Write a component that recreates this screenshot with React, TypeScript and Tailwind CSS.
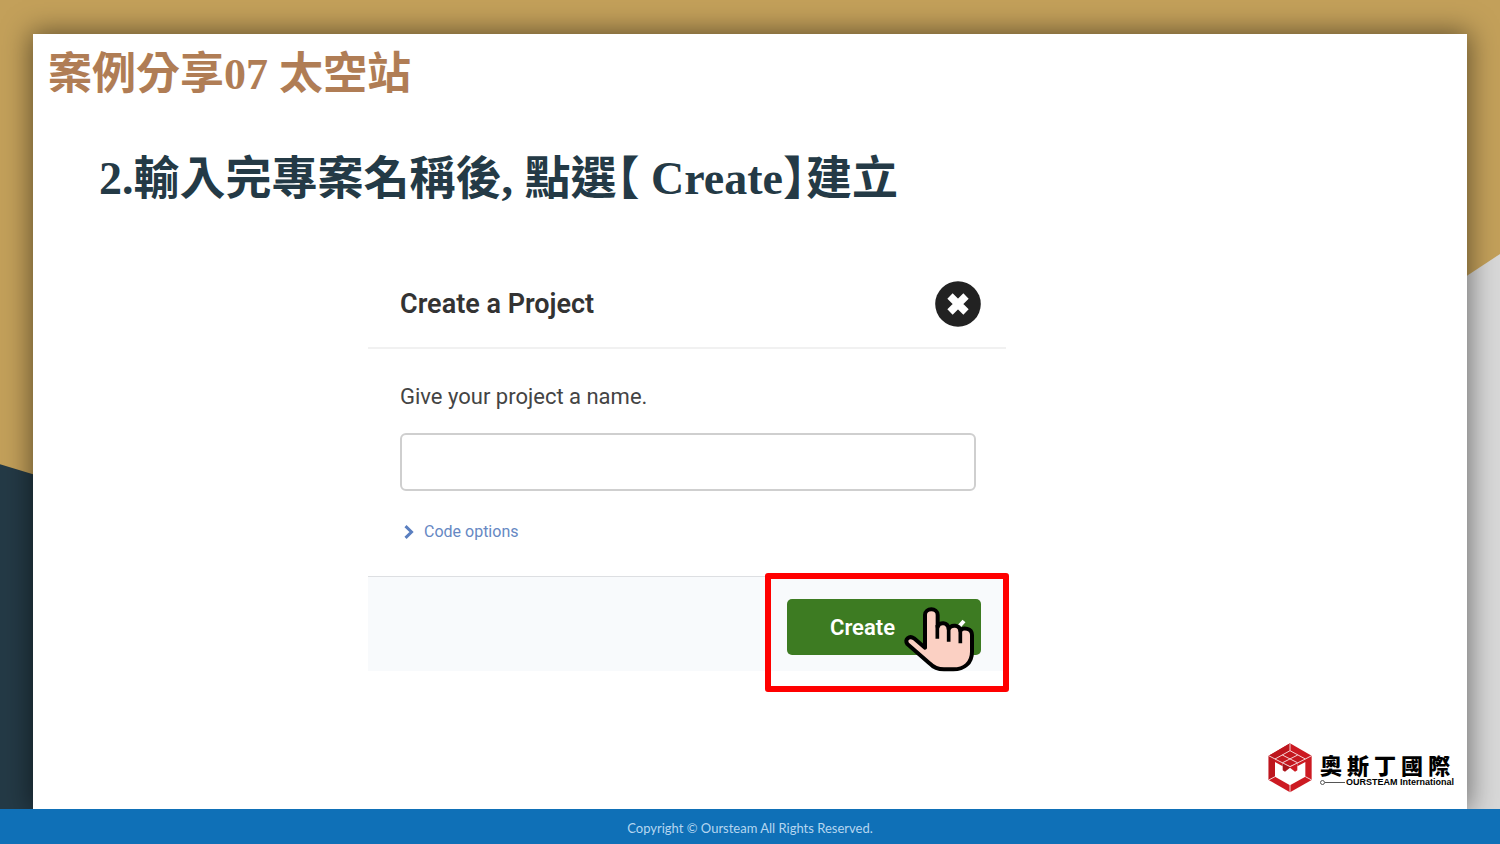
import React from "react";

function CloseIcon() {
  return (
    <svg viewBox="0 0 46 46" className="size-[46px]" aria-hidden="true">
      <circle cx="23" cy="23" r="22.8" fill="#222222" />
      <path d="M15 15 L31 31 M31 15 L15 31" stroke="#ffffff" strokeWidth="7.5" strokeLinecap="butt" />
    </svg>
  );
}

function ChevronIcon() {
  return (
    <svg viewBox="0 0 10 16" className="h-4 w-[10px]" aria-hidden="true">
      <path d="M1.5 2.2 L7.5 8 L1.5 13.8" fill="none" stroke="#5a7fc0" strokeWidth="3" />
    </svg>
  );
}

function CheckIcon() {
  return (
    <svg viewBox="0 0 24 20" className="h-5 w-6" aria-hidden="true">
      <path d="M3 11 L9 17 L21 4" fill="none" stroke="#ffffff" strokeWidth="4" />
    </svg>
  );
}

function HandPointer() {
  return (
    <svg viewBox="460 142 213 195" className="h-[65px] w-[71px]" aria-hidden="true">
      <path
        d="M523 264 L523 166 C523 143 561 143 561 166 L561 202 C565 186 592 186 594 208 C601 193 627 195 629 213 C637 202 664 205 664 226 L664 276 C664 311 640 329 608 329 L580 329 C560 329 547 322 538 312 L470 253 C460 240 476 226 490 236 Z"
        fill="#fbd0c3"
        stroke="#000000"
        strokeWidth="12"
        strokeLinejoin="round"
      />
      <path
        d="M560 196 L560 237 M594 206 L594 246 M629 212 L629 251"
        fill="none"
        stroke="#000000"
        strokeWidth="11"
      />
    </svg>
  );
}

function LogoMark() {
  return (
    <svg viewBox="0 0 132 150" className="h-[50px] w-[44px] shrink-0" aria-hidden="true">
      <path d="M66 1 L131 38 L131 111 L66 148 L2 111 L2 38 Z" fill="#cc1a22" />
      <path d="M66 1 L66 22 L21 48 L21 101 L2 111 L2 38 Z" fill="#bd161e" />
      <path d="M21 57 L44 70 L44 60 L88 60 L88 70 L112 57 L112 101 L66 127 L21 101 Z" fill="#ffffff" />
      <path d="M44 58 L66 70 L66 74 L51 86 L44 82 Z" fill="#a8141b" />
      <path d="M88 58 L66 70 L66 74 L81 86 L88 82 Z" fill="#cc1a22" />
      <path d="M66 25 L110 48 L66 70 L22 48 Z" fill="#c4181f" />
      <path
        d="M66 1 V23 M2 38 L21 48 M131 38 L112 48 M2 111 L21 101 M131 111 L112 101 M66 148 V126 M21 48 L66 23 L112 48 M21 48 L66 71 L112 48 M43 36 L88 59 M89 36 L44 59"
        fill="none"
        stroke="#ffffff"
        strokeWidth="2.4"
      />
    </svg>
  );
}

function CompanyLogo() {
  return (
    <div className="flex items-center gap-2">
      <LogoMark />
      <div className="flex flex-col pt-1 text-black">
        <span
          lang="zh-Hant"
          className="font-['Noto_Sans_CJK_TC',sans-serif] text-[22px] leading-6 font-black whitespace-nowrap"
        >
          奧 斯 丁 國 際
        </span>
        <div className="flex items-center font-['Liberation_Sans',sans-serif] text-[9px] leading-3 font-bold whitespace-nowrap">
          <span className="size-[5px] rounded-full border border-[#555555]" />
          <span className="mr-px h-px w-5 bg-[#555555]" />
          <span>OURSTEAM International</span>
        </div>
      </div>
    </div>
  );
}

function CreateProjectDialog() {
  return (
    <form
      className="w-full max-w-[638px] font-[Roboto,sans-serif]"
      onSubmit={(event) => event.preventDefault()}
    >
      <div className="flex h-[89px] items-center justify-between border-b-2 border-[#f1f1f1] pr-[25px] pl-8">
        <h3 className="text-[27px] leading-8 font-semibold text-[#333333]">Create a Project</h3>
        <button type="button" aria-label="Close">
          <CloseIcon />
        </button>
      </div>
      <div className="flex flex-col items-start pt-8 pr-[30px] pb-8 pl-8">
        <label htmlFor="project-name" className="text-[22px] leading-8 text-[#444444]">
          Give your project a name.
        </label>
        <input
          id="project-name"
          type="text"
          className="mt-5 h-[58px] w-full rounded-md border-2 border-[#cfcfcf] bg-white px-4 text-[22px] outline-none"
        />
        <button type="button" className="mt-[29px] flex items-center gap-[10px] pl-1 text-[16px] leading-6 text-[#6688c3]">
          <ChevronIcon />
          Code options
        </button>
      </div>
      <div className="relative flex h-[95px] items-start justify-end border-t border-[#dddfe2] bg-[#f8fafc] pt-[22px] pr-[25px]">
        <button
          type="submit"
          className="relative flex h-14 w-[194px] items-center justify-between rounded-[5px] bg-[#3d7b22] pr-[14px] pl-[43px] text-[22px] font-semibold text-white"
        >
          Create
          <CheckIcon />
          <span className="absolute top-2 right-[6px]">
            <HandPointer />
          </span>
        </button>
        <div className="pointer-events-none absolute -top-1 -right-[3px] h-[119px] w-[244px] rounded-[3px] border-6 border-[#ff0000]" />
      </div>
    </form>
  );
}

export default function App() {
  return (
    <div className="flex min-h-screen flex-col bg-[#c3a05a]">
      <main className="flex flex-1 overflow-hidden pt-[34px]">
        <div className="w-[33px] shrink-0 bg-[#243a46] [clip-path:polygon(0_55.5%,100%_56.8%,100%_100%,0_100%)]" />
        <section className="relative z-10 flex flex-1 flex-col bg-white shadow-[0_0_26px_2px_rgba(0,0,0,0.5)]">
          <h1
            lang="zh-Hant"
            className="pt-[17px] pl-[15px] font-['Liberation_Serif','Noto_Sans_CJK_TC',serif] text-[44px] leading-12 font-bold text-[#b07d55]"
          >
            案例分享07 太空站
          </h1>
          <h2
            lang="zh-Hant"
            className="mt-14 pl-[66px] font-['Liberation_Serif','Noto_Sans_CJK_TC',serif] text-[46px] leading-12 font-bold text-[#243a46] [font-feature-settings:'halt']"
          >
            2.輸入完專案名稱後, 點選【 Create】建立
          </h2>
          <div className="mt-[57px] pr-8 pl-[335px]">
            <CreateProjectDialog />
          </div>
          <div className="mt-auto flex justify-end pr-[13px] pb-4">
            <CompanyLogo />
          </div>
        </section>
        <div className="w-[33px] shrink-0 bg-[#d8d8d8] [clip-path:polygon(0_31.2%,100%_28.4%,100%_100%,0_100%)]" />
      </main>
      <footer className="relative z-20 flex h-[35px] items-center justify-center bg-[#0f70b7] pt-1 font-[Lato,sans-serif] text-[13px] text-[#b5d6f0]">
        Copyright © Oursteam All Rights Reserved.
      </footer>
    </div>
  );
}
